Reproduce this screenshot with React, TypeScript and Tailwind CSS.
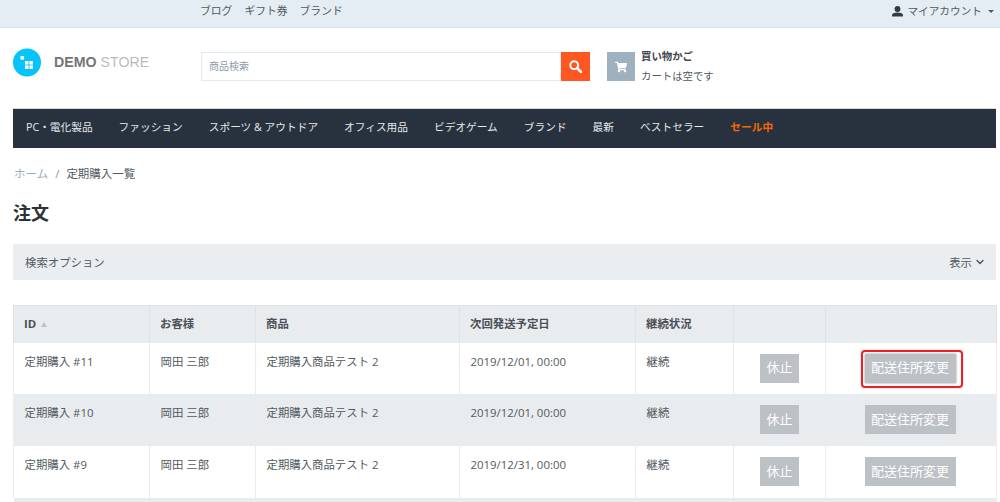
import React from "react";
import { ChevronDown } from "lucide-react";
import { FaShoppingCart } from "react-icons/fa";

const navItems = ["PC・電化製品", "ファッション", "スポーツ & アウトドア", "オフィス用品", "ビデオゲーム", "ブランド", "最新", "ベストセラー"];

const rows = [
  { id: "定期購入 #11", date: "2019/12/01, 00:00", h: "h-[51px]", striped: false, focus: true },
  { id: "定期購入 #10", date: "2019/12/01, 00:00", h: "h-[52px]", striped: true, focus: false },
  { id: "定期購入 #9", date: "2019/12/31, 00:00", h: "h-[52px]", striped: false, focus: false },
];

const cell = "border-x border-[#e9ecef] px-[10.5px] pt-[10px] align-top";
const btnCell = "border-x border-[#e9ecef] align-middle text-center";
const headCell = "border-x border-[#dee2e6] px-[10px] pb-[2px] text-left align-middle font-bold";
const btn = "relative inline-flex h-[29px] items-center justify-center bg-[#bcc1c5] text-[13px] text-white";

const App = () => {
  return (
    <div className="h-[502px] w-[1000px] overflow-hidden bg-white text-[11.4px] text-[#525a60] font-['Open_Sans','Noto_Sans_CJK_JP',sans-serif]">
      {/* top bar */}
      <div className="flex h-[28px] items-start justify-between border-b border-[#d6e2ea] bg-[#e4edf3] pt-[3px] pr-[6px] pl-[200px]">
        <div className="flex gap-[12px] text-[10.8px]">
          <span>ブログ</span>
          <span>ギフト券</span>
          <span>ブランド</span>
        </div>
        <div className="flex items-center text-[10.67px]">
          <svg width="11" height="11" viewBox="0 0 11 11" className="mr-[4px] fill-[#343a40]">
            <circle cx="5.5" cy="3" r="2.9" />
            <path d="M0 10.5V9c0-1.8 2.2-2.6 5.5-2.6S11 7.2 11 9v1.5z" />
          </svg>
          <span>マイアカウント</span>
          <span className="ml-[6px] h-0 w-0 border-x-[3px] border-t-[3px] border-x-transparent border-t-[#525a60]" />
        </div>
      </div>

      {/* header */}
      <div className="flex h-[80px] px-[13px]">
        <div className="mt-[20px] flex h-[29px] w-[188px] shrink-0 items-center">
          <svg width="28" height="29" viewBox="0 0 28 29">
            <circle cx="14" cy="14.5" r="14" fill="#05c3fb" />
            <rect x="7.5" y="8" width="3.6" height="3.6" fill="#fff" />
            <rect x="12" y="13" width="3.6" height="3.6" fill="#fff" />
            <rect x="16.4" y="13" width="3.6" height="3.6" fill="#fff" />
            <rect x="12" y="17.4" width="3.6" height="3.6" fill="#fff" />
            <rect x="16.4" y="17.4" width="3.6" height="3.6" fill="#fff" />
          </svg>
          <span className="ml-[13px] pt-[1px] text-[14.2px] text-[#bbbbbb] font-['Liberation_Sans',sans-serif]">
            <b className="text-[#757575]">DEMO</b> STORE
          </span>
        </div>
        <div className="mt-[24px] flex h-[29px] w-[389px] shrink-0">
          <div className="flex flex-1 items-center border border-[#e4eaef] pl-[7px] text-[10px] text-[#8c9bae]">商品検索</div>
          <div className="flex w-[29px] items-center justify-center bg-[#ff5722]">
            <svg width="13" height="13" viewBox="0 0 13 13" fill="none" stroke="#fff">
              <circle cx="5.2" cy="5.2" r="3.9" strokeWidth="2" />
              <path d="M8.2 8.2L12 12" strokeWidth="2.6" strokeLinecap="round" />
            </svg>
          </div>
        </div>
        <div className="mt-[24px] ml-[17px] flex h-[29px]">
          <div className="flex h-[29px] w-[28px] items-center justify-center bg-[#9fb1bf]">
            <FaShoppingCart size={12} className="text-white" />
          </div>
          <div className="ml-[6px] flex flex-col">
            <b className="mt-[-1px] text-[10.4px] leading-[11px] text-[#3f464c]">買い物かご</b>
            <span className="mt-[7px] text-[10.4px] leading-[14px]">カートは空です</span>
          </div>
        </div>
      </div>

      {/* nav */}
      <div className="mr-[4px] ml-[13px] flex h-[40px] items-center gap-[26px] border-t border-[#d4d8dc] bg-[#27323e] px-[13px] pb-[3px] text-[10.7px] text-[#e6e9ec]">
        {navItems.map((item) => (
          <span key={item}>{item}</span>
        ))}
        <b className="text-[#f56a00]">セール中</b>
      </div>

      {/* breadcrumb */}
      <div className="mt-[18px] flex h-[16px] items-center pl-[14px] text-[11.5px]">
        <span className="text-[#9aabbb]">ホーム</span>
        <span className="mx-[7px] text-[#8c98a3]">/</span>
        <span>定期購入一覧</span>
      </div>

      <h1 className="mt-[20px] pl-[13px] text-[18px] leading-[22px] font-bold text-[#2b3238]">注文</h1>

      {/* search options */}
      <div className="mt-[20px] mr-[4px] ml-[13px] flex h-[36px] items-center justify-between bg-[#ebeef0] pt-[1px] pr-[10px] pl-[12px]">
        <span>検索オプション</span>
        <span className="flex items-center">
          表示
          <ChevronDown size={12} strokeWidth={3} className="ml-[2px]" />
        </span>
      </div>

      {/* table */}
      <table className="mt-[25px] ml-[13px] w-[983px] table-fixed border-collapse border-t border-[#dee2e6]">
        <colgroup>
          <col className="w-[136px]" />
          <col className="w-[106px]" />
          <col className="w-[204px]" />
          <col className="w-[176px]" />
          <col className="w-[98px]" />
          <col className="w-[92px]" />
          <col className="w-[171px]" />
        </colgroup>
        <thead>
          <tr className="h-[37px] bg-[#e9ecef] text-[#495057]">
            <th className={headCell}>
              ID<span className="ml-[5px] inline-block h-0 w-0 border-x-[3.5px] border-b-[5px] border-x-transparent border-b-[#bcc1c5] align-[1px]" />
            </th>
            <th className={headCell}>お客様</th>
            <th className={headCell}>商品</th>
            <th className={headCell}>次回発送予定日</th>
            <th className={headCell}>継続状況</th>
            <th className={headCell}></th>
            <th className={headCell}></th>
          </tr>
        </thead>
        <tbody>
          {rows.map((row) => (
            <tr key={row.id} className={`${row.h} ${row.striped ? "bg-[#e9ecef]" : "bg-white"}`}>
              <td className={cell}>{row.id}</td>
              <td className={cell}>岡田 三郎</td>
              <td className={cell}>定期購入商品テスト 2</td>
              <td className={cell}>{row.date}</td>
              <td className={cell}>継続</td>
              <td className={btnCell}>
                <span className={`${btn} w-[39px]`}>休止</span>
              </td>
              <td className={btnCell}>
                <span className={`${btn} mr-[2px] w-[91px] ${row.focus ? "shadow-[0_0_2px_#8a8f93]" : ""}`}>
                  配送住所変更
                  {row.focus && (
                    <span className="absolute -top-[4px] -right-[7px] -bottom-[5px] -left-[4px] rounded-[4px] border-2 border-[#ef2020] shadow-[0_0_2px_#f0808080]" />
                  )}
                </span>
              </td>
            </tr>
          ))}
          <tr className="h-[4px] bg-[#e9ecef]">
            <td colSpan={7} />
          </tr>
        </tbody>
      </table>
    </div>
  );
};

export default App;
